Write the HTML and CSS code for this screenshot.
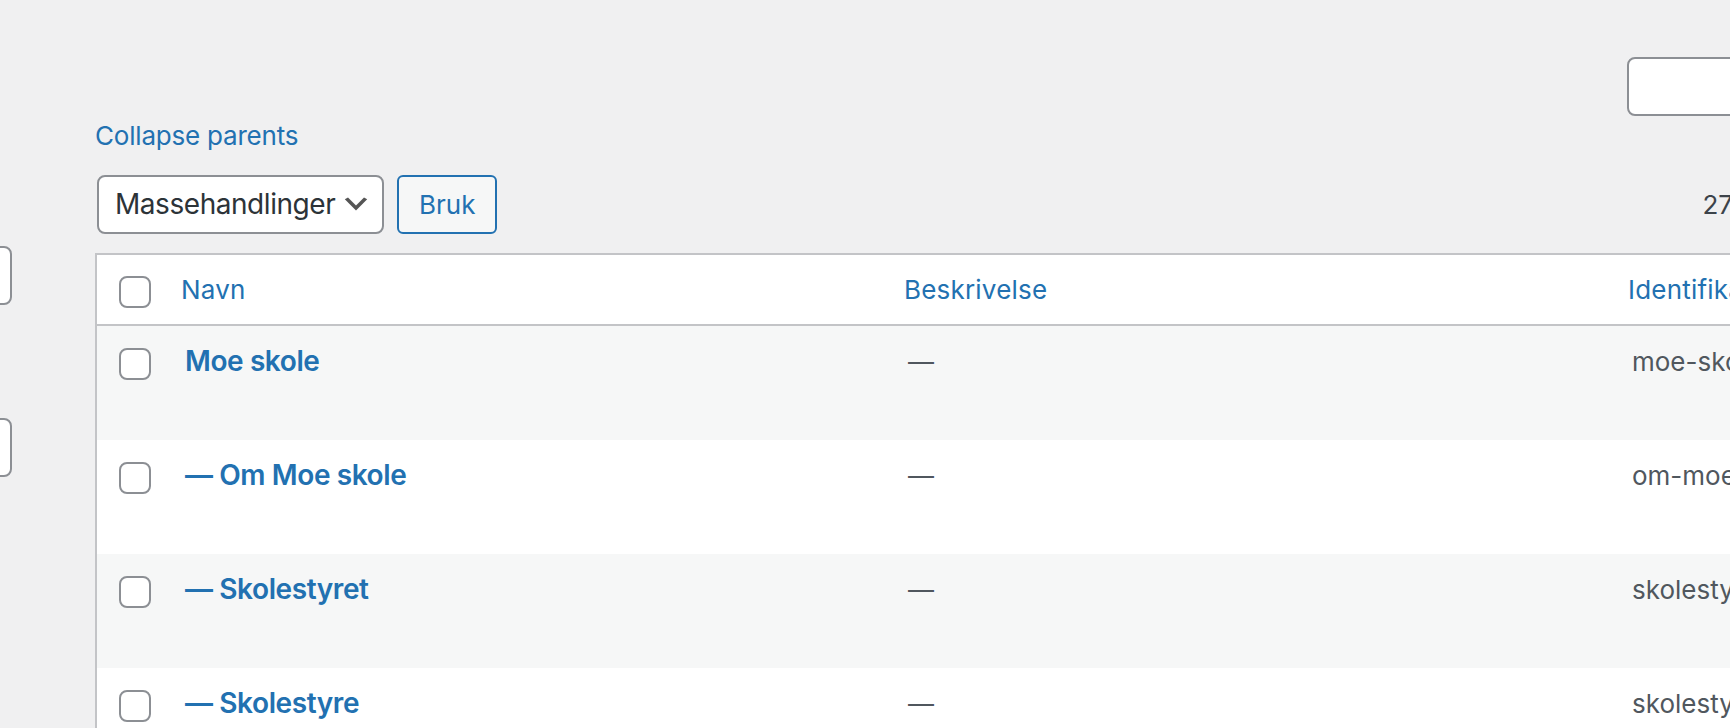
FILE: index.html
```html
<!DOCTYPE html>
<html lang="nb">
<head>
    <meta charset="UTF-8">
    <title>Kategorier</title>
    <link rel="stylesheet" href="styles.css">
</head>
<body>
    <div class="wrap">
        <div class="col-left">
            <div class="form-field"><input type="text" class="field-input"></div>
            <div class="form-field"><input type="text" class="field-input"></div>
        </div>

        <div class="col-right">
            <div class="search-box">
                <input type="search" class="search-input">
            </div>
            <a class="collapse-link" href="#">Collapse parents</a>

            <div class="tablenav">
                <div class="bulkactions">
                    <div class="select">
                        <span>Massehandlinger</span>
                        <svg class="select-arrow" viewBox="0 0 20 20" width="32" height="32"><path d="M5 6l5 5 5-5 2 1-7 7-7-7 2-1z"/></svg>
                    </div>
                    <button class="button">Bruk</button>
                </div>
                <div class="displaying-num">27 elementer</div>
            </div>

            <table class="list-table">
                <colgroup>
                    <col class="col-check">
                    <col class="col-name">
                    <col class="col-desc">
                    <col class="col-slug">
                </colgroup>
                <thead>
                    <tr>
                        <td class="check-column"><span class="checkbox"></span></td>
                        <th><a href="#">Navn</a></th>
                        <th><a href="#">Beskrivelse</a></th>
                        <th><a href="#">Identifikator</a></th>
                    </tr>
                </thead>
                <tbody>
                    <tr class="alt">
                        <th class="check-column"><span class="checkbox"></span></th>
                        <td><a class="row-title" href="#">Moe skole</a></td>
                        <td class="muted">—</td>
                        <td class="muted">moe-skole</td>
                    </tr>
                    <tr>
                        <th class="check-column"><span class="checkbox"></span></th>
                        <td><a class="row-title" href="#">— Om Moe skole</a></td>
                        <td class="muted">—</td>
                        <td class="muted">om-moe-skole</td>
                    </tr>
                    <tr class="alt">
                        <th class="check-column"><span class="checkbox"></span></th>
                        <td><a class="row-title" href="#">— Skolestyret</a></td>
                        <td class="muted">—</td>
                        <td class="muted">skolestyret</td>
                    </tr>
                    <tr>
                        <th class="check-column"><span class="checkbox"></span></th>
                        <td><a class="row-title" href="#">— Skolestyre</a></td>
                        <td class="muted">—</td>
                        <td class="muted">skolestyre</td>
                    </tr>
                </tbody>
            </table>
        </div>
    </div>
</body>
</html>
```

FILE: styles.css
```css
body { margin: 0; background: #f0f0f1; font-family: Inter, "Noto Sans", sans-serif; font-size: 26px; color: #3c434a; overflow: hidden; }
a { color: #2271b1; text-decoration: none; }
.wrap { display: flex; gap: 83px; }

/* left form column, mostly off screen */
.col-left { flex: 0 0 200px; margin-left: -188px; padding-top: 246px; }
.field-input { display: block; width: 200px; height: 59px; box-sizing: border-box; border: 2px solid #8c8f94; border-radius: 8px; background: #fff; margin: 0 0 113px; }

/* right column */
.col-right { flex: 0 0 2100px; }
.search-box { margin: 57px 0 0 1532px; }
.search-input { display: block; width: 400px; height: 59px; box-sizing: border-box; border: 2px solid #8c8f94; border-radius: 8px; background: #fff; }
.collapse-link { display: inline-block; line-height: 40px; letter-spacing: -0.2px; }

.tablenav { display: flex; align-items: center; height: 60px; margin: 18px 0 19px; }
.bulkactions { display: flex; align-items: center; }
.select { display: flex; align-items: center; justify-content: space-between; box-sizing: border-box; width: 287px; height: 59px; margin-left: 2px; padding: 0 10px 0 16px; background: #fff; border: 2px solid #8c8f94; border-radius: 8px; font-size: 28px; letter-spacing: -0.45px; color: #2c3338; }
.select-arrow { fill: #555; }
.button { box-sizing: border-box; height: 59px; margin-left: 13px; padding: 0 20px; background: #f6f7f7; border: 2px solid #2271b1; border-radius: 6px; color: #2271b1; font-family: inherit; font-size: 26px; }
.displaying-num { margin-left: 1205px; white-space: nowrap; }

/* table */
.list-table { table-layout: fixed; width: 2017px; border-spacing: 0; border: 2px solid #c3c4c7; border-right: 0; border-bottom: 0; background: #fff; }
.col-check { width: 68px; }
.col-name { width: 723px; }
.col-desc { width: 724px; }
.col-slug { width: 500px; }
.list-table thead th, .list-table thead td { height: 65px; padding: 0 16px; text-align: left; font-weight: normal; vertical-align: middle; border-bottom: 2px solid #c3c4c7; white-space: nowrap; overflow: hidden; }
.list-table thead th a { letter-spacing: 0.2px; }
.list-table thead .check-column { padding: 4px 0 0 22px; }
.list-table tbody tr { height: 114px; }
.list-table tbody td { padding: 16px 20px; vertical-align: top; line-height: 39px; }
.list-table tbody .check-column { padding: 22px 0 0 22px; vertical-align: top; }
.list-table tr.alt { background: #f6f7f7; }
.checkbox { display: block; width: 32px; height: 32px; box-sizing: border-box; border: 2px solid #8c8f94; border-radius: 8px; background: #fff; }
.row-title { font-size: 28px; font-weight: 600; letter-spacing: -0.4px; }
.muted { color: #50575e; }
```
